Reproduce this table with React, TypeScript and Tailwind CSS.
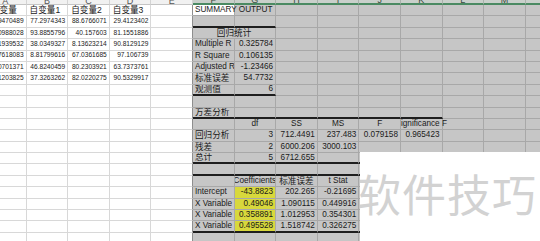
import React from 'react';
import clsx from 'clsx';

type Cell = {
  t?: string;
  a?: 'l' | 'r' | 'c';
  span?: number;
  hl?: boolean;
  spill?: boolean;
  clipLeft?: boolean;
};

const letters = ['A', 'B', 'C', 'D', 'E', 'F', 'G', 'H', 'I', 'J', 'K', 'L', 'M', 'N'];

const num = (t: string, hl = false): Cell => ({ t, a: 'r', hl });

// one entry per sheet row (21 rows), keyed by column index (0 = A)
const rows: Record<number, Cell>[] = [
  {
    0: { t: '因变量' },
    1: { t: '自变量1' },
    2: { t: '自变量2' },
    3: { t: '自变量3' },
    5: { t: 'SUMMARY OUTPUT', spill: true },
  },
  { 0: num('51.9470489'), 1: num('77.2974343'), 2: num('88.6766071'), 3: num('29.4123402') },
  { 0: num('62.0988028'), 1: num('93.8855796'), 2: num('40.157603'), 3: num('81.1551886'), 5: { t: '回归统计', a: 'c', span: 2 } },
  { 0: num('48.1939532'), 1: num('38.0349327'), 2: num('8.13623214'), 3: num('90.8129129'), 5: { t: 'Multiple R' }, 6: num('0.325784') },
  { 0: num('35.7618083'), 1: num('8.81799616'), 2: num('67.0361685'), 3: num('97.106739'), 5: { t: 'R Square' }, 6: num('0.106135') },
  { 0: num('70.0701371'), 1: num('46.8240459'), 2: num('80.2303921'), 3: num('63.7373761'), 5: { t: 'Adjusted R Square' }, 6: num('-1.23466') },
  { 0: num('24.1203825'), 1: num('37.3263262'), 2: num('82.0220275'), 3: num('90.5329917'), 5: { t: '标准误差' }, 6: num('54.7732') },
  { 5: { t: '观测值' }, 6: num('6') },
  {},
  { 5: { t: '方差分析' } },
  {
    6: { t: 'df', a: 'c' },
    7: { t: 'SS', a: 'c' },
    8: { t: 'MS', a: 'c' },
    9: { t: 'F', a: 'c' },
    10: { t: 'Significance F', a: 'c', clipLeft: true },
  },
  { 5: { t: '回归分析' }, 6: num('3'), 7: num('712.4491'), 8: num('237.483'), 9: num('0.079158'), 10: num('0.965423') },
  { 5: { t: '残差' }, 6: num('2'), 7: num('6000.206'), 8: num('3000.103') },
  { 5: { t: '总计' }, 6: num('5'), 7: num('6712.655') },
  {},
  { 6: { t: 'Coefficients', a: 'c' }, 7: { t: '标准误差', a: 'c' }, 8: { t: 't Stat', a: 'c' } },
  { 5: { t: 'Intercept' }, 6: num('-43.8823', true), 7: num('202.265'), 8: num('-0.21695') },
  { 5: { t: 'X Variable 1' }, 6: num('0.49046', true), 7: num('1.090115'), 8: num('0.449916') },
  { 5: { t: 'X Variable 2' }, 6: num('0.358891', true), 7: num('1.012953'), 8: num('0.354301') },
  { 5: { t: 'X Variable 3' }, 6: num('0.495528', true), 7: num('1.518742'), 8: num('0.326275') },
  {},
];

// rows (1-based) whose bottom edge carries the heavy table rule, with the columns it spans
const rules: Record<number, number[]> = {
  2: [5, 6],
  8: [5, 6],
  10: [5, 6, 7, 8, 9, 10],
  14: [5, 6, 7, 8, 9, 10, 11, 12, 13],
  15: [5, 6, 7, 8, 9, 10, 11, 12, 13],
  20: [5, 6, 7, 8, 9, 10, 11, 12, 13],
};

const hasCjk = (s: string) => /[\u4e00-\u9fff]/.test(s);

const SheetCell = ({ cell, r, c }: { cell?: Cell; r: number; c: number }) => {
  const selected = c >= 5;
  const active = r === 1 && c === 5;
  const ruled = rules[r]?.includes(c);
  const leftData = r >= 2 && r <= 7 && c <= 3;
  const text = cell?.t ?? '';

  return (
    <div
      className={clsx(
        'flex items-center border-r border-b leading-none whitespace-nowrap',
        cell?.span === 2 && 'col-span-2',
        selected ? 'border-[#a8a8a8]' : 'border-[#d8d8d8]',
        c === 4 && 'border-r-[#8e8e8e]',
        ruled && 'border-b-2 border-b-[#1e1e1e]',
        cell?.hl ? 'bg-[#d8d83c]' : active || !selected ? 'bg-white' : 'bg-[#c6c6c6]',
        cell?.a === 'r' && 'justify-end pr-[2px]',
        cell?.a === 'c' && 'justify-center',
        (!cell?.a || cell.a === 'l') && (r === 1 && c === 0 ? 'justify-start pl-[6px]' : 'justify-start pl-[2px]'),
        leftData ? 'text-[6.6px]' : hasCjk(text) ? 'text-[8.6px]' : 'text-[8.2px]',
        r === 1 && c >= 1 && c <= 3 && 'pl-[3px]',
        cell?.spill && 'relative z-10 overflow-visible',
        cell?.clipLeft && 'relative z-10 overflow-visible [clip-path:inset(0_-80px_0_0)]',
        !cell?.spill && !cell?.clipLeft && 'overflow-hidden',
        selected ? 'text-[#1a1a1a]' : 'text-[#222]'
      )}
    >
      {text && <span className="whitespace-nowrap">{text}</span>}
    </div>
  );
};

const App = () => {
  return (
    <div className="relative w-[540px] h-[241px] overflow-hidden bg-white font-['Liberation_Sans','Noto_Sans_CJK_SC',sans-serif]">
      <div className="-ml-[15px] -mt-[11px] grid grid-cols-[repeat(14,41.6px)] grid-rows-[16px_repeat(21,11.4px)]">
        {letters.map((l, c) => (
          <div
            key={l}
            className={clsx(
              'flex items-end justify-center text-[9px] leading-[6px] border-r',
              c >= 5
                ? 'bg-[#c9d0cb] text-[#3b4a40] border-[#a9b2ac] border-b-2 border-b-[#4a8a62]'
                : 'bg-[#f1f1f1] text-[#555] border-[#d4d4d4] border-b border-b-[#c4c4c4]'
            )}
          >
            {l}
          </div>
        ))}

        {rows.map((row, i) => {
          const r = i + 1;
          const out: React.ReactNode[] = [];
          for (let c = 0; c < 14; c++) {
            const cell = row[c];
            out.push(<SheetCell key={`${r}-${c}`} cell={cell} r={r} c={c} />);
            if (cell?.span === 2) c++;
          }
          return out;
        })}
      </div>

      {/* watermark box over the lower right of the sheet */}
      <div className="absolute left-[360px] top-[152px] w-[180px] h-[89px] overflow-hidden bg-white">
        <div className="-ml-[3px] pt-[19px] text-[44px] leading-none tracking-[1px] text-[#d2d2d2] whitespace-nowrap font-['Noto_Sans_CJK_SC',sans-serif]">
          软件技巧
        </div>
      </div>
    </div>
  );
};

export default App;
